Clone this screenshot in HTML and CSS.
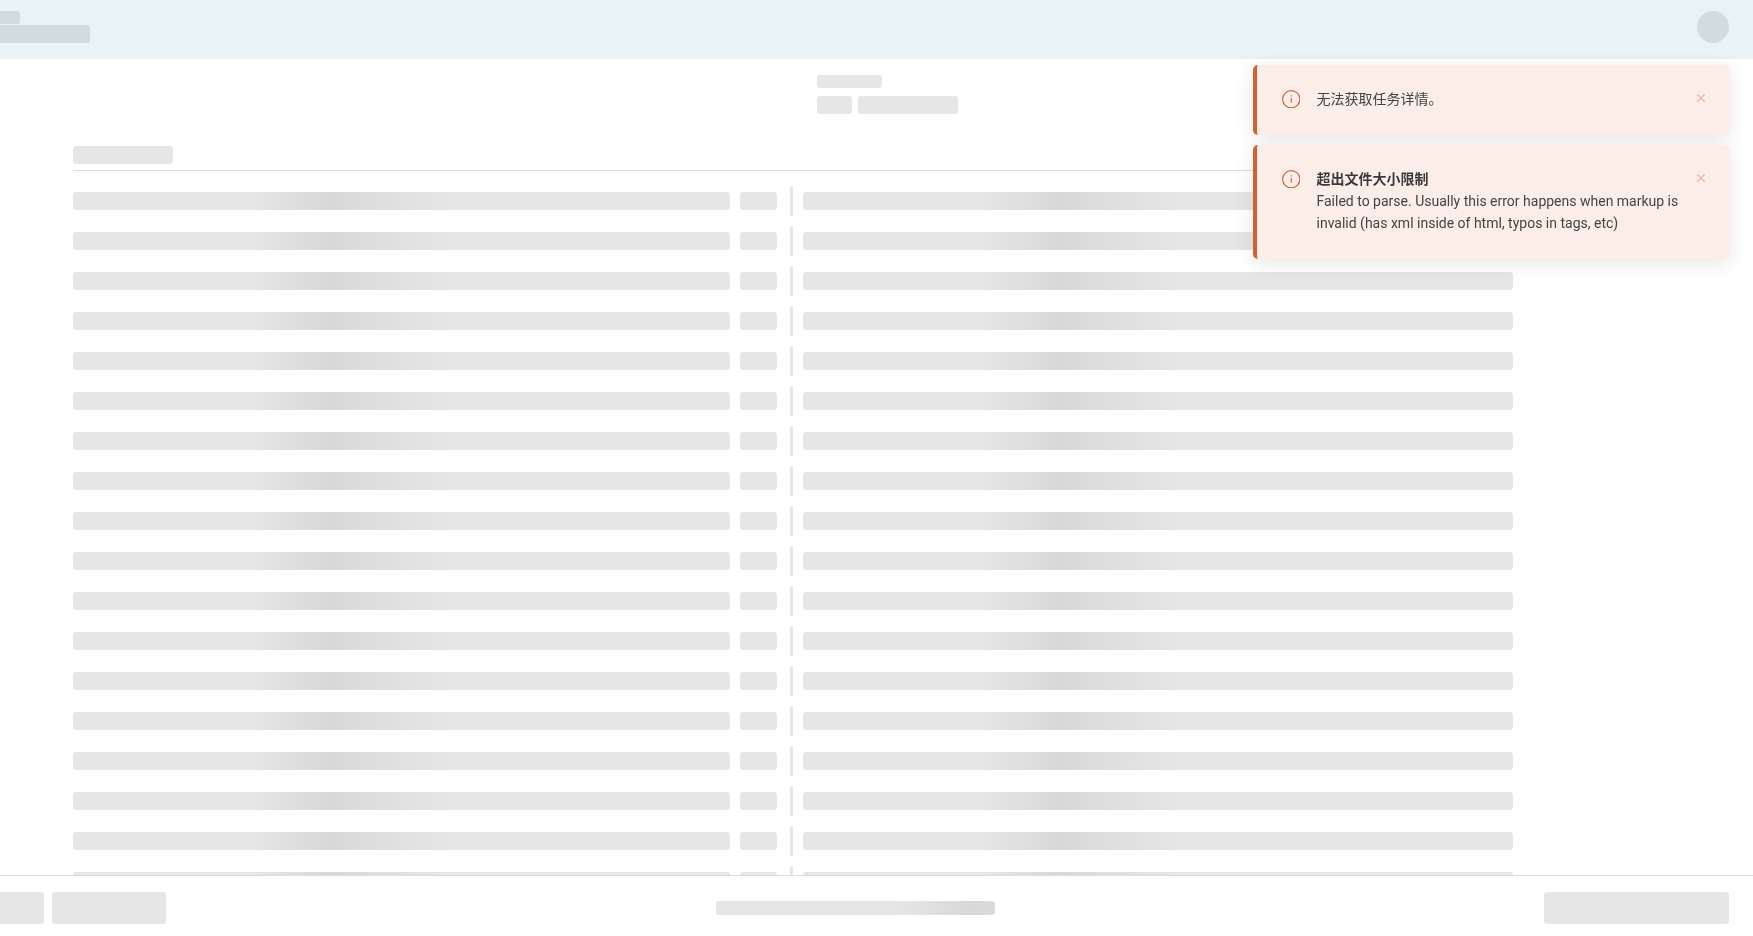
FILE: index.html
```html
<!DOCTYPE html>
<html lang="zh">
<head>
<meta charset="utf-8">
<title>任务详情</title>
<link rel="stylesheet" href="styles.css">
</head>
<body>
<div class="app">
  <header class="topbar">
    <div class="brand">
      <div class="sk sk-brand-a"></div>
      <div class="sk sk-brand-b"></div>
    </div>
    <div class="avatar"></div>
  </header>
  <main class="main">
    <div class="summary">
      <div class="sk sk-sum-a"></div>
      <div class="summary-row">
        <div class="sk sk-sum-b"></div>
        <div class="sk sk-sum-c"></div>
      </div>
    </div>
    <div class="content">
      <div class="sk sk-title"></div>
      <div class="rule"></div>
      <div class="rows">
        <div class="row"><div class="sk shimmer cell-a"></div><div class="sk cell-b"></div><div class="divider"></div><div class="sk shimmer cell-c"></div></div>
        <div class="row"><div class="sk shimmer cell-a"></div><div class="sk cell-b"></div><div class="divider"></div><div class="sk shimmer cell-c"></div></div>
        <div class="row"><div class="sk shimmer cell-a"></div><div class="sk cell-b"></div><div class="divider"></div><div class="sk shimmer cell-c"></div></div>
        <div class="row"><div class="sk shimmer cell-a"></div><div class="sk cell-b"></div><div class="divider"></div><div class="sk shimmer cell-c"></div></div>
        <div class="row"><div class="sk shimmer cell-a"></div><div class="sk cell-b"></div><div class="divider"></div><div class="sk shimmer cell-c"></div></div>
        <div class="row"><div class="sk shimmer cell-a"></div><div class="sk cell-b"></div><div class="divider"></div><div class="sk shimmer cell-c"></div></div>
        <div class="row"><div class="sk shimmer cell-a"></div><div class="sk cell-b"></div><div class="divider"></div><div class="sk shimmer cell-c"></div></div>
        <div class="row"><div class="sk shimmer cell-a"></div><div class="sk cell-b"></div><div class="divider"></div><div class="sk shimmer cell-c"></div></div>
        <div class="row"><div class="sk shimmer cell-a"></div><div class="sk cell-b"></div><div class="divider"></div><div class="sk shimmer cell-c"></div></div>
        <div class="row"><div class="sk shimmer cell-a"></div><div class="sk cell-b"></div><div class="divider"></div><div class="sk shimmer cell-c"></div></div>
        <div class="row"><div class="sk shimmer cell-a"></div><div class="sk cell-b"></div><div class="divider"></div><div class="sk shimmer cell-c"></div></div>
        <div class="row"><div class="sk shimmer cell-a"></div><div class="sk cell-b"></div><div class="divider"></div><div class="sk shimmer cell-c"></div></div>
        <div class="row"><div class="sk shimmer cell-a"></div><div class="sk cell-b"></div><div class="divider"></div><div class="sk shimmer cell-c"></div></div>
        <div class="row"><div class="sk shimmer cell-a"></div><div class="sk cell-b"></div><div class="divider"></div><div class="sk shimmer cell-c"></div></div>
        <div class="row"><div class="sk shimmer cell-a"></div><div class="sk cell-b"></div><div class="divider"></div><div class="sk shimmer cell-c"></div></div>
        <div class="row"><div class="sk shimmer cell-a"></div><div class="sk cell-b"></div><div class="divider"></div><div class="sk shimmer cell-c"></div></div>
        <div class="row"><div class="sk shimmer cell-a"></div><div class="sk cell-b"></div><div class="divider"></div><div class="sk shimmer cell-c"></div></div>
        <div class="row"><div class="sk shimmer cell-a"></div><div class="sk cell-b"></div><div class="divider"></div><div class="sk shimmer cell-c"></div></div>
      </div>
    </div>
  </main>
  <footer class="footer">
    <div class="footer-left">
      <div class="sk sk-foot-a"></div>
      <div class="sk sk-foot-b"></div>
    </div>
    <div class="sk shimmer sk-foot-c"></div>
    <div class="sk sk-foot-d"></div>
  </footer>
</div>
<div class="toasts">
  <div class="toast">
    <svg class="toast-icon" viewBox="0 0 18 18" aria-hidden="true"><circle cx="9" cy="9" r="8.4"/><path d="M9 5.2v1.1M9 7.8v4.7"/></svg>
    <div class="toast-body">无法获取任务详情。</div>
    <svg class="toast-close" viewBox="0 0 10 10" aria-hidden="true"><path d="M1.2 1.2l7.6 7.6M8.8 1.2l-7.6 7.6"/></svg>
  </div>
  <div class="toast">
    <svg class="toast-icon" viewBox="0 0 18 18" aria-hidden="true"><circle cx="9" cy="9" r="8.4"/><path d="M9 5.2v1.1M9 7.8v4.7"/></svg>
    <div class="toast-body">
      <div class="toast-title">超出文件大小限制</div>
      <div>Failed to parse. Usually this error happens when markup is invalid (has xml inside of html, typos in tags, etc)</div>
    </div>
    <svg class="toast-close" viewBox="0 0 10 10" aria-hidden="true"><path d="M1.2 1.2l7.6 7.6M8.8 1.2l-7.6 7.6"/></svg>
  </div>
</div>
</body>
</html>
```

FILE: styles.css
```css
* { box-sizing: border-box; }
html, body { margin: 0; height: 100%; overflow: hidden; background: #fff; }
body { font-family: Roboto, "Noto Sans CJK SC", sans-serif; font-size: 14px; line-height: 22px; color: #444; }

.app { display: flex; flex-direction: column; height: 936px; }

.sk { background-color: #e6e6e6; border-radius: 3px; flex: none; }
.shimmer {
  background-image: linear-gradient(90deg, #e6e6e6 180px, #d8d8d8 255px, #e6e6e6 375px);
  background-repeat: no-repeat;
}

.topbar {
  flex: none; height: 59px; background: #e9f3f6;
  display: flex; justify-content: space-between; align-items: flex-start;
  padding: 11px 24px 0 0;
}
.brand { display: flex; flex-direction: column; gap: 1px; margin-left: -10px; }
.brand .sk { background-color: #d2dbdd; }
.sk-brand-a { width: 30px; height: 13px; }
.sk-brand-b { width: 100px; height: 18px; }
.avatar { width: 32px; height: 32px; border-radius: 50%; background: #d2dbdd; }

.main { flex: 1; min-height: 0; overflow: hidden; padding-top: 16px; }
.summary { margin-left: 817px; display: flex; flex-direction: column; gap: 8px; }
.sk-sum-a { width: 65px; height: 13px; }
.summary-row { display: flex; gap: 6px; }
.sk-sum-b { width: 35px; height: 18px; }
.sk-sum-c { width: 100px; height: 18px; }

.content { width: 1440px; margin: 32px 0 0 73px; }
.sk-title { width: 100px; height: 18px; }
.rule { height: 1px; background: #ddd; margin: 6px 0 15px; }

.rows { display: flex; flex-direction: column; gap: 10px; }
.row { display: flex; align-items: center; height: 30px; }
.cell-a { width: 657px; height: 18px; }
.cell-b { width: 37px; height: 18px; margin-left: 10px; }
.divider { width: 3px; height: 30px; border-radius: 2px; background: #e6e6e6; margin: 0 10px 0 13px; flex: none; }
.cell-c { width: 710px; height: 18px; }

.footer {
  flex: none; height: 61px; border-top: 1px solid #ddd; background: #fff;
  display: flex; justify-content: space-between; align-items: center;
  padding: 4px 24px 0 0;
}
.footer-left { display: flex; gap: 8px; margin-left: -10px; }
.sk-foot-a { width: 54px; height: 32px; }
.sk-foot-b { width: 114px; height: 32px; }
.sk-foot-c { width: 279px; height: 14px; }
.sk-foot-d { width: 185px; height: 32px; }

.toasts {
  position: fixed; top: 65px; right: 23px; width: 477px;
  display: flex; flex-direction: column; gap: 10px;
}
.toast {
  display: flex; align-items: flex-start;
  background: #fbeee9; border-left: 4px solid #d0603a; border-radius: 5px;
  padding: 23px 0 25px 24.5px;
  box-shadow: 0 4px 20px rgba(0, 0, 0, .1);
}
.toast-icon { width: 18.5px; height: 18.5px; margin: 1.5px 16.5px 0 0; flex: none; fill: none; stroke: #cf5f3c; stroke-width: 1.1; }
.toast-body { width: 372.5px; flex: none; }
.toast-title { font-weight: 700; color: #3a3a3a; }
.toast-close { width: 10px; height: 10px; margin: 5px 0 0 7px; flex: none; fill: none; stroke: #efb5a4; stroke-width: 1.3; }
```
